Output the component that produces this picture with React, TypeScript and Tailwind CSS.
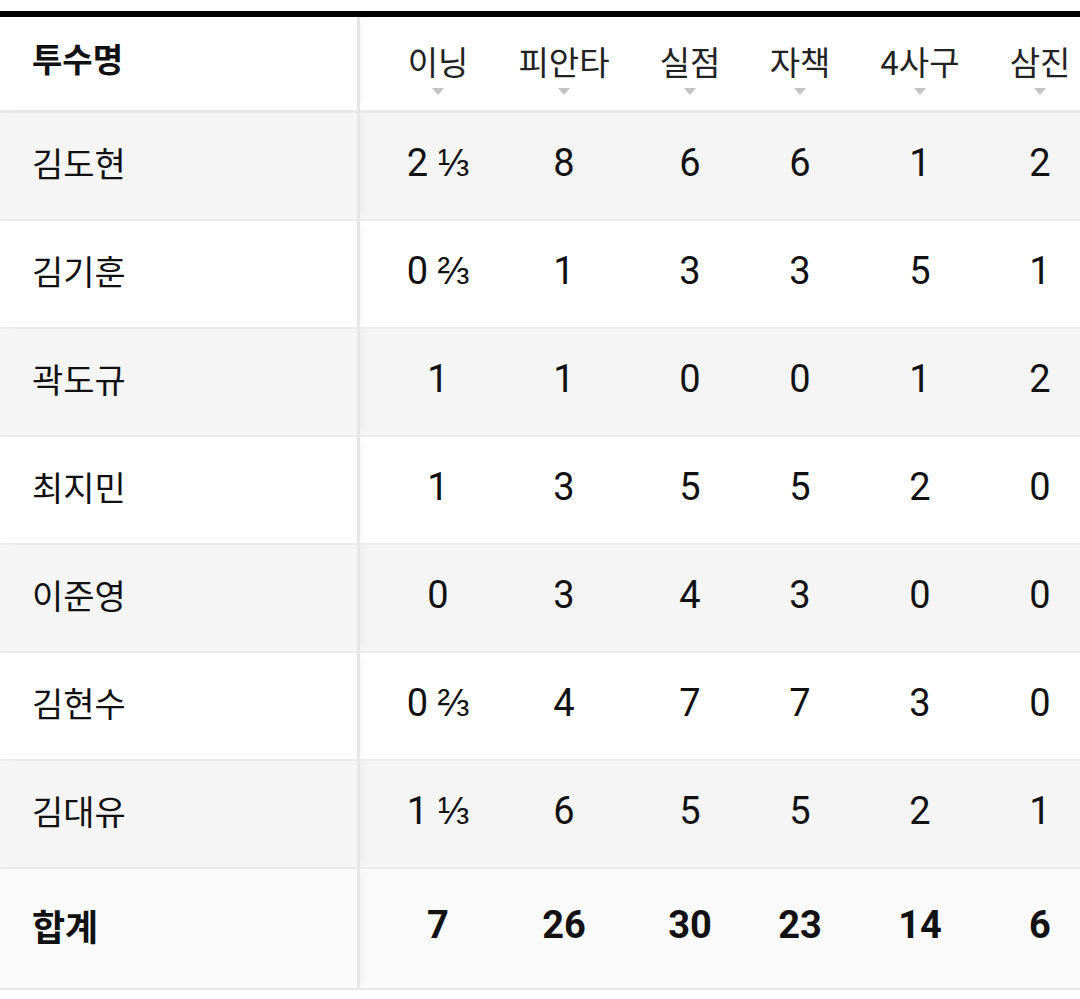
import React from "react";

const columns = [
  { label: "이닝", w: "w-[141px] pl-[15px]" },
  { label: "피안타", w: "w-[126px]" },
  { label: "실점", w: "w-[126px]" },
  { label: "자책", w: "w-[94px]" },
  { label: "4사구", w: "w-[146px]" },
  { label: "삼진", w: "w-[94px]" },
];

const pitchers = [
  { name: "김도현", stats: ["2 ⅓", "8", "6", "6", "1", "2"] },
  { name: "김기훈", stats: ["0 ⅔", "1", "3", "3", "5", "1"] },
  { name: "곽도규", stats: ["1", "1", "0", "0", "1", "2"] },
  { name: "최지민", stats: ["1", "3", "5", "5", "2", "0"] },
  { name: "이준영", stats: ["0", "3", "4", "3", "0", "0"] },
  { name: "김현수", stats: ["0 ⅔", "4", "7", "7", "3", "0"] },
  { name: "김대유", stats: ["1 ⅓", "6", "5", "5", "2", "1"] },
];

const totals = ["7", "26", "30", "23", "14", "6"];

const font = "font-['Roboto','Noto_Sans_CJK_KR',sans-serif]";

function NameCell({ children, bold }: { children: React.ReactNode; bold?: boolean }) {
  return (
    <div className="w-[360px] shrink-0 self-stretch flex items-center pl-[32px] pb-[8px] border-r-[3px] border-[#e6e6e6] shadow-[6px_0_8px_-4px_rgba(0,0,0,0.05)]">
      <span
        className={`text-[34px] text-[#111] font-['Noto_Sans_CJK_KR',sans-serif] ${
          bold ? "font-bold" : ""
        }`}
      >
        {children}
      </span>
    </div>
  );
}

export default function App() {
  return (
    <div className={`w-[1080px] h-[999px] bg-white overflow-hidden pt-[11px] ${font}`}>
      <div className="w-[1100px] border-t-[6px] border-black">
        {/* header */}
        <div className="flex h-[96px] border-b-[3px] border-[#e8e8e8] bg-white">
          <NameCell bold>
            <span className="text-[33px] relative -top-[2px]">투수명</span>
          </NameCell>
          {columns.map((c) => (
            <div key={c.label} className={`${c.w} shrink-0 flex flex-col items-center pt-[25px]`}>
              <span className="text-[33px] leading-[38px] text-[#222] font-['Noto_Sans_CJK_KR',sans-serif]">
                {c.label}
              </span>
              <span className="mt-[8px] w-0 h-0 border-l-[6px] border-r-[6px] border-t-[7px] border-l-transparent border-r-transparent border-t-[#c4c4c4]" />
            </div>
          ))}
        </div>

        {/* pitcher rows */}
        {pitchers.map((p, i) => (
          <div
            key={p.name}
            className={`flex h-[108px] border-b-[2px] border-[#ececec] ${
              i % 2 === 0 ? "bg-[#f5f5f5]" : "bg-white"
            }`}
          >
            <NameCell>{p.name}</NameCell>
            {p.stats.map((s, j) => (
              <div
                key={j}
                className={`${columns[j].w} shrink-0 flex items-center justify-center pb-[6px] text-[38px] text-[#111] font-['Roboto',sans-serif]`}
              >
                {s}
              </div>
            ))}
          </div>
        ))}

        {/* totals */}
        <div className="flex h-[121px] border-b-[2px] border-[#e8e8e8] bg-[#fafafa]">
          <NameCell bold>
            <span className="text-[36px]">합계</span>
          </NameCell>
          {totals.map((t, j) => (
            <div
              key={j}
              className={`${columns[j].w} shrink-0 flex items-center justify-center pb-[6px] text-[38px] font-bold text-[#111] font-['Roboto',sans-serif]`}
            >
              {t}
            </div>
          ))}
        </div>
      </div>
    </div>
  );
}
